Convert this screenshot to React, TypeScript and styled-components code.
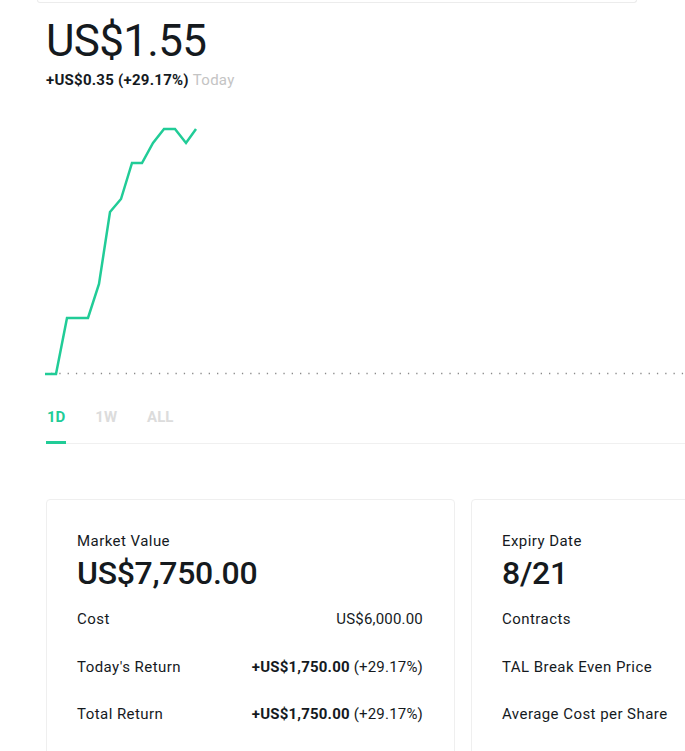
import React from 'react';
import styled, { createGlobalStyle } from 'styled-components';

const GREEN = '#21cc97';
const TEXT = '#151a1e';

const GlobalStyle = createGlobalStyle`
  html, body {
    margin: 0;
    padding: 0;
    background: #ffffff;
    overflow: hidden;
  }
  body {
    font-family: Roboto, "Liberation Sans", sans-serif;
    color: ${TEXT};
  }
`;

const Page = styled.div`
  width: 685px;
  height: 751px;
  overflow: hidden;
  padding-left: 46px;
  box-sizing: border-box;
`;

const TopBar = styled.div`
  width: 598px;
  height: 2px;
  margin-left: -9px;
  border: 1px solid #ececec;
  border-top: none;
  border-radius: 0 0 4px 4px;
`;

const Price = styled.div`
  margin-top: 16px;
  font-size: 44px;
  line-height: 44px;
  font-weight: 400;
  letter-spacing: -0.7px;
`;

const Change = styled.div`
  margin-top: 7px;
  font-size: 15px;
  line-height: 20px;
  font-weight: 700;
  letter-spacing: 0.25px;
  color: ${TEXT};
`;

const Muted = styled.span`
  font-weight: 400;
  color: #c4c4c4;
  margin-left: 4px;
`;

const ChartWrap = styled.div`
  margin-top: 11px;
  margin-left: -1px;
  height: 280px;
`;

const Tabs = styled.div`
  display: flex;
  gap: 28px;
  margin-top: 26px;
  width: 700px;
  border-bottom: 1px solid #f0f0f0;
`;

const Tab = styled.div<{ $active?: boolean }>`
  font-size: 15px;
  line-height: 20px;
  font-weight: 700;
  padding: 0 1px 14px 1px;
  margin-bottom: -1px;
  color: ${(p) => (p.$active ? GREEN : '#dcdcdc')};
  border-bottom: 3px solid ${(p) => (p.$active ? GREEN : 'transparent')};
`;

const Cards = styled.div`
  display: flex;
  gap: 16px;
  margin-top: 55px;
`;

const Card = styled.div`
  width: 409px;
  height: 300px;
  flex-shrink: 0;
  box-sizing: border-box;
  border: 1px solid #efefef;
  border-radius: 4px;
  padding: 31px 31px 0 30px;
`;

const Label = styled.div`
  font-size: 15px;
  line-height: 20px;
  letter-spacing: 0.45px;
`;

const BigValue = styled.div`
  margin-top: 2px;
  font-size: 32px;
  line-height: 40px;
  font-weight: 500;
  letter-spacing: -0.3px;
`;

const Rows = styled.div`
  display: flex;
  flex-direction: column;
  gap: 27.5px;
  margin-top: 16px;
`;

const Row = styled.div`
  display: flex;
  justify-content: space-between;
  font-size: 15px;
  line-height: 20px;
  letter-spacing: 0.45px;
  white-space: nowrap;
`;

const Amount = styled.span`
  letter-spacing: 0.2px;
`;

const Strong = styled.span`
  font-weight: 700;
`;

const points = [
  [0, 273], [11, 273], [22, 217], [43, 217], [54, 183], [65, 111], [76, 98],
  [87, 62], [97, 62], [108, 42], [119, 28], [130, 28], [141, 42], [151, 28],
];

function Chart() {
  return (
    <svg width="640" height="280" viewBox="0 0 640 280">
      <line x1="6" y1="272.5" x2="640" y2="272.5" stroke="#8a8a8a" strokeWidth="1.3" strokeDasharray="1.3 7" />
      <polyline
        points={points.map((p) => p.join(',')).join(' ')}
        fill="none"
        stroke={GREEN}
        strokeWidth="2.5"
        strokeLinejoin="miter"
      />
    </svg>
  );
}

export default function App() {
  return (
    <>
      <GlobalStyle />
      <Page>
        <TopBar />
        <Price>US$1.55</Price>
        <Change>
          +US$0.35 (+29.17%)<Muted>Today</Muted>
        </Change>
        <ChartWrap>
          <Chart />
        </ChartWrap>
        <Tabs>
          <Tab $active>1D</Tab>
          <Tab>1W</Tab>
          <Tab>ALL</Tab>
        </Tabs>
        <Cards>
          <Card>
            <Label>Market Value</Label>
            <BigValue>US$7,750.00</BigValue>
            <Rows>
              <Row>
                <span>Cost</span>
                <Amount>US$6,000.00</Amount>
              </Row>
              <Row>
                <span>Today's Return</span>
                <Amount>
                  <Strong>+US$1,750.00</Strong> (+29.17%)
                </Amount>
              </Row>
              <Row>
                <span>Total Return</span>
                <Amount>
                  <Strong>+US$1,750.00</Strong> (+29.17%)
                </Amount>
              </Row>
            </Rows>
          </Card>
          <Card>
            <Label>Expiry Date</Label>
            <BigValue>8/21</BigValue>
            <Rows>
              <Row>
                <span>Contracts</span>
              </Row>
              <Row>
                <span>TAL Break Even Price</span>
              </Row>
              <Row>
                <span>Average Cost per Share</span>
              </Row>
            </Rows>
          </Card>
        </Cards>
      </Page>
    </>
  );
}
